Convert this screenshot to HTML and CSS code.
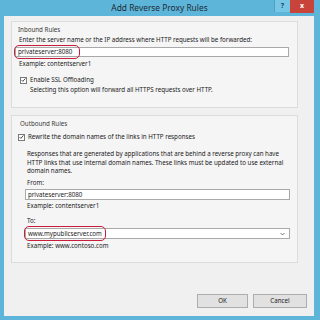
FILE: index.html
```html
<!DOCTYPE html>
<html>
<head>
<meta charset="utf-8">
<link rel="stylesheet" href="styles.css">
</head>
<body>
<div class="window">
  <div class="titlebar">
    <div class="tb-side"></div>
    <div class="title">Add Reverse Proxy Rules</div>
    <div class="tb-side tb-buttons">
      <div class="tb-btn help">?</div>
      <div class="tb-btn close">x</div>
    </div>
  </div>
  <div class="client">
    <div class="group inbound">
      <div class="legend">Inbound Rules</div>
      <div class="label">Enter the server name or the IP address where HTTP requests will be forwarded:</div>
      <div class="field-wrap">
        <div class="field">privateserver:8080</div>
        <div class="highlight hl-1"></div>
      </div>
      <div class="hint">Example: contentserver1</div>
      <div class="check-row">
        <span class="checkbox"><svg viewBox="0 0 8 8" width="6" height="6"><path d="M1 4.2 L3 6.2 L7 1.4" fill="none" stroke="#222" stroke-width="1.3"/></svg></span>
        <span>Enable SSL Offloading</span>
      </div>
      <div class="note">Selecting this option will forward all HTTPS requests over HTTP.</div>
    </div>
    <div class="group outbound">
      <div class="legend">Outbound Rules</div>
      <div class="check-row">
        <span class="checkbox"><svg viewBox="0 0 8 8" width="6" height="6"><path d="M1 4.2 L3 6.2 L7 1.4" fill="none" stroke="#222" stroke-width="1.3"/></svg></span>
        <span>Rewrite the domain names of the links in HTTP responses</span>
      </div>
      <div class="indent">
        <p class="para">Responses that are generated by applications that are behind a reverse proxy can have HTTP links that use internal domain names. These links must be updated to use external domain names.</p>
        <div class="label from">From:</div>
        <div class="field">privateserver:8080</div>
        <div class="hint">Example: contentserver1</div>
        <div class="label to">To:</div>
        <div class="field-wrap">
          <div class="field combo"><span>www.mypublicserver.com</span><svg class="chev" viewBox="0 0 8 6" width="5" height="4"><path d="M1 1.5 L4 4.5 L7 1.5" fill="none" stroke="#444" stroke-width="1.2"/></svg></div>
          <div class="highlight hl-2"></div>
        </div>
        <div class="hint">Example: www.contoso.com</div>
      </div>
    </div>
    <div class="buttons">
      <div class="btn ok">OK</div>
      <div class="btn cancel">Cancel</div>
    </div>
  </div>
</div>
</body>
</html>
```
FILE: styles.css
```css
html, body {
  margin: 0;
  padding: 0;
}
body {
  width: 319px;
  height: 320px;
  background: #5db6da;
  font-family: "Noto Sans", "DejaVu Sans", sans-serif;
  font-size: 6.2px;
  color: #1a1a1a;
  overflow: hidden;
}
.window {
  display: flex;
  flex-direction: column;
  height: 320px;
}
.titlebar {
  height: 16px;
  display: grid;
  grid-template-columns: 1fr auto 1fr;
  align-items: start;
}
.title {
  font-size: 8.4px;
  line-height: 16px;
  color: #1d2a33;
}
.tb-buttons {
  display: flex;
  justify-content: flex-end;
  padding-right: 5px;
}
.tb-btn {
  height: 12px;
  line-height: 12px;
  text-align: center;
  font-size: 7px;
  font-weight: bold;
}
.help {
  width: 15px;
  background: #76c6e6;
  color: #1b3f66;
  border-left: 1px solid #4f9fc2;
}
.close {
  width: 24px;
  height: 13px;
  background: #c8443a;
  color: #fff;
}
.client {
  flex: 1;
  margin: 0 5px 4px 4px;
  background: #f0f0f0;
  display: flex;
  flex-direction: column;
  padding: 5px 16px 0 7px;
}
.group {
  border: 1px solid #dcdcdc;
  background: #f5f5f5;
}
.inbound {
  padding: 3px 0 0 3px;
  box-sizing: border-box;
  height: 87px;
}
.outbound {
  margin-top: 7px;
  padding: 3px 0 0 0;
  box-sizing: border-box;
  height: 148px;
}
.legend {
  line-height: 10px;
  color: #3a3a3a;
}
.label, .hint, .note, .check-row {
  line-height: 10px;
}
.inbound .legend { padding-left: 3px; }
.inbound .label { padding-left: 4px; }
.inbound .hint { padding-left: 4px; margin-top: 2px; }
.inbound .check-row { margin-top: 6px; padding-left: 5px; }
.inbound .note { padding-left: 15px; }
.field-wrap {
  position: relative;
}
.field {
  box-sizing: border-box;
  height: 10px;
  line-height: 8px;
  background: #fff;
  border: 1px solid #a9a9a9;
  padding-left: 2px;
}
.inbound .field-wrap { margin-top: 2px; margin-right: 8px; }
.combo {
  display: flex;
  justify-content: space-between;
  align-items: center;
  padding-right: 4px;
}
.chev {
  display: block;
}
.check-row {
  display: flex;
  align-items: center;
  gap: 3px;
}
.checkbox {
  box-sizing: border-box;
  width: 7px;
  height: 7px;
  background: #fff;
  border: 1px solid #7a7a7a;
  display: flex;
  align-items: center;
  justify-content: center;
}
.outbound .legend { padding-left: 8px; }
.outbound .check-row { margin-top: 3px; padding-left: 6px; }
.indent {
  padding-left: 13px;
  margin-right: 7px;
}
.para {
  margin: 8px 0 0 0;
  line-height: 8.5px;
  padding-left: 2px;
  width: 262px;
}
.indent .label, .indent .hint { padding-left: 2px; }
.indent .from { margin-top: 2.5px; }
.indent .field { height: 11px; line-height: 9px; margin-top: 1px; }
.indent .field-wrap .field { margin-top: 0; }
.indent .hint { margin-top: 1px; }
.indent .to { margin-top: 5px; }
.indent .field-wrap { margin-top: 2px; }
.indent .hint:last-child { margin-top: 2px; }
.highlight {
  position: absolute;
  border: 1.5px solid #c81e3c;
  border-radius: 5px;
  top: -2px;
  bottom: -2px;
  left: -1px;
}
.hl-1 { width: 64px; }
.hl-2 { width: 80px; }
.buttons {
  display: flex;
  justify-content: flex-end;
  gap: 5px;
  margin-top: auto;
  margin-bottom: 8px;
  margin-right: -9px;
}
.btn {
  box-sizing: border-box;
  height: 14px;
  line-height: 12px;
  text-align: center;
  background: #e1e1e1;
  border: 1px solid #adadad;
}
.ok { width: 51px; }
.cancel { width: 54px; }
```
